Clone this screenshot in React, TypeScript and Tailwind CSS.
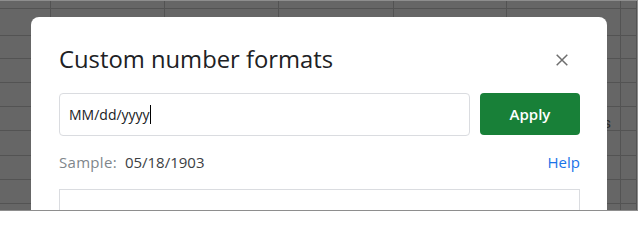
import React from "react";

const colWidths = [51, 114, 114, 115, 113, 114, 16];
const rowHeights = [8, 27, 23, 24, 24, 24, 25, 24, 24, 10];

function Backdrop() {
  return (
    <div className="flex flex-col">
      {rowHeights.map((h, r) => (
        <div key={r} className="flex shrink-0 border-b border-[#535353]" style={{ height: h }}>
          {colWidths.map((w, c) => (
            <div
              key={c}
              className="relative shrink-0 border-r border-[#535353]"
              style={{ width: w }}
            >
              {r === 5 && c === 5 ? (
                <span className="absolute right-[9px] top-[8px] whitespace-nowrap text-[15px] leading-[16px] text-[#2b2b2b] [font-family:Roboto,'Liberation_Sans',sans-serif]">
                  Items
                </span>
              ) : null}
            </div>
          ))}
        </div>
      ))}
    </div>
  );
}

export default function App() {
  return (
    <div className="relative h-[211px] w-[638px] overflow-hidden border-t border-r border-b border-[#8e8e8e] bg-[#666666] [font-family:'Open_Sans',Roboto,sans-serif]">
      <Backdrop />
      <div className="absolute left-[31px] top-[16px] h-[240px] w-[576px] rounded-[8px] bg-white pl-[28px] pr-[27px] pt-[26px]">
        <div className="flex h-[32px] items-center justify-between">
          <h1 className="text-[23.8px] leading-[32px] text-[#202124]">
            Custom number formats
          </h1>
          <svg width="12" height="12" viewBox="0 0 12 12" className="mr-[12px] mt-[1px]">
            <path d="M0.7 0.7 L11.3 11.3 M11.3 0.7 L0.7 11.3" stroke="#6e6e6e" strokeWidth="1.5" />
          </svg>
        </div>
        <div className="mt-[18px] flex gap-[10px]">
          <div className="flex h-[43px] w-[411px] items-center rounded-[4px] border border-[#dadce0] px-[9px] text-[14px] text-[#202124]">
            <span>MM/dd/yyyy</span>
            <span className="inline-block h-[19px] w-[1px] bg-black" />
          </div>
          <button className="flex h-[42px] w-[100px] items-center justify-center rounded-[4px] bg-[#188038] text-[15px] font-semibold text-white">
            Apply
          </button>
        </div>
        <div className="mt-[16px] flex h-[20px] items-center justify-between text-[15px] leading-[20px]">
          <div className="flex gap-[8px]">
            <span className="tracking-[0.3px] text-[#80868b]">Sample:</span>
            <span className="text-[#3c4043]">05/18/1903</span>
          </div>
          <a className="text-[#1a73e8]">Help</a>
        </div>
        <div className="mt-[17px] h-[60px] w-full border border-[#dadce0]" />
      </div>
    </div>
  );
}
